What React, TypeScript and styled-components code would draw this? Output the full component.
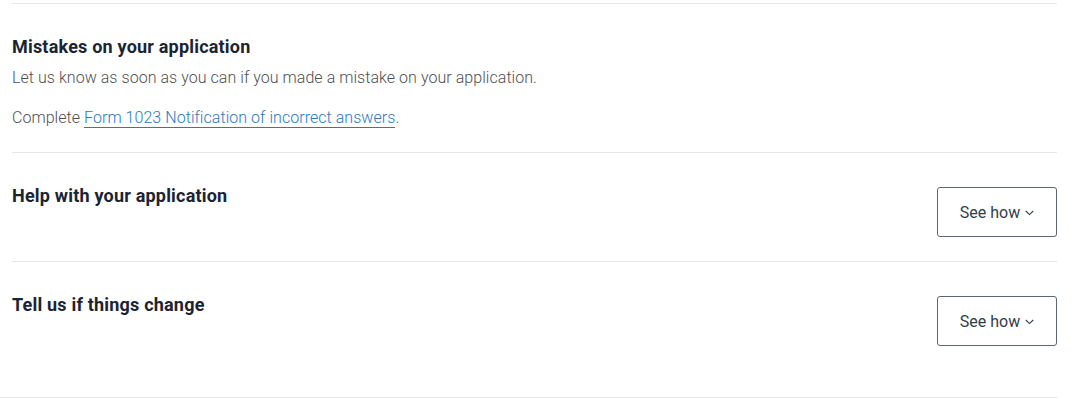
import React from 'react';
import styled, { createGlobalStyle } from 'styled-components';

const GlobalStyle = createGlobalStyle`
  body {
    margin: 0;
    background: #fff;
    font-family: Roboto, "Liberation Sans", Arial, sans-serif;
  }
`;

const Page = styled.div`
  width: 1057px;
`;

const List = styled.div`
  margin-left: 12px;
  padding-top: 3px;
`;

const Section = styled.section`
  border-top: 1px solid #e6e6e6;
  padding: 31px 0 23px;
  display: flex;
  align-items: flex-start;
  justify-content: space-between;
  gap: 24px;
`;

const Body = styled.div`
  flex: 1;
`;

const Heading = styled.h2`
  margin: 0;
  font-size: 18px;
  line-height: 24px;
  letter-spacing: 0.2px;
  font-weight: 700;
  color: #1b2432;
`;

const Text = styled.p<{ $gap?: number }>`
  margin: ${({ $gap }) => $gap ?? 8}px 0 0;
  font-size: 16px;
  line-height: 22px;
  letter-spacing: 0.05px;
  font-weight: 300;
  color: #505050;
`;

const Link = styled.a`
  color: #2a79c0;
  text-decoration: none;
  border-bottom: 1px solid #2a79c0;
`;

const ToggleButton = styled.button`
  margin-top: 3px;
  margin-bottom: 1px;
  width: 120px;
  height: 50px;
  display: inline-flex;
  align-items: center;
  justify-content: center;
  gap: 5px;
  background: #fff;
  border: 1px solid #5d6671;
  border-radius: 3px;
  font-family: Roboto, "Liberation Sans", Arial, sans-serif;
  font-size: 16px;
  font-weight: 400;
  color: #323d4b;
  cursor: pointer;
`;

const Chevron = styled.svg`
  width: 9px;
  height: 6px;
  margin-top: 2px;
`;

const BottomRule = styled.div`
  margin-top: 27px;
  border-top: 1px solid #e6e6e6;
`;

const SeeHow = () => (
  <ToggleButton type="button">
    See how
    <Chevron viewBox="0 0 9 6" fill="none">
      <polyline points="0.8,1 4.5,4.6 8.2,1" stroke="#323d4b" strokeWidth="1.1" />
    </Chevron>
  </ToggleButton>
);

const App = () => {
  const sections = [
    { title: 'Help with your application' },
    { title: 'Tell us if things change' }
  ];

  return (
    <Page>
      <GlobalStyle />
      <List>
        <Section>
          <Body>
            <Heading>Mistakes on your application</Heading>
            <Text>Let us know as soon as you can if you made a mistake on your application.</Text>
            <Text $gap={18}>
              Complete <Link href="#">Form 1023 Notification of incorrect answers</Link>.
            </Text>
          </Body>
        </Section>
        {sections.map((s) => (
          <Section key={s.title}>
            <Heading>{s.title}</Heading>
            <SeeHow />
          </Section>
        ))}
      </List>
      <BottomRule />
    </Page>
  );
};

export default App;
